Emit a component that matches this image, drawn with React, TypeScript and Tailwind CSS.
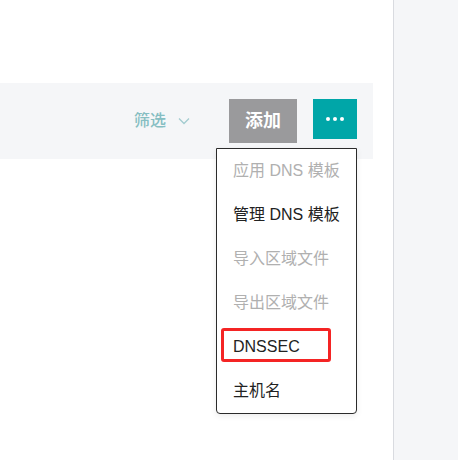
import React from "react";

// DNS record toolbar with the "more" dropdown open

const menuItems = [
  { label: "应用 DNS 模板", disabled: true },
  { label: "管理 DNS 模板", disabled: false },
  { label: "导入区域文件", disabled: true },
  { label: "导出区域文件", disabled: true },
  { label: "DNSSEC", disabled: false, highlight: true },
  { label: "主机名", disabled: false },
];

export default function App() {
  return (
    <div
      className="flex w-[458px] h-[460px] bg-white overflow-hidden"
      style={{ fontFamily: '"Liberation Sans", "Noto Sans CJK SC", sans-serif' }}
    >
      {/* Main area */}
      <div className="w-[393px] shrink-0 pt-[83px] pr-[20px]">
        <div className="h-[76px] bg-[#f5f6f8] flex items-start justify-end pt-[16px] pr-[16px]">
          {/* Filter */}
          <button className="flex items-center h-[44px] text-[16px] font-medium text-[#86bec2] mr-[39px]">
            筛选
            <svg
              className="ml-[12px]"
              width="12"
              height="8"
              viewBox="0 0 12 8"
              fill="none"
              stroke="#a3ccd0"
              strokeWidth="1.3"
            >
              <path d="M1 1.5 L6 6.5 L11 1.5" />
            </svg>
          </button>

          {/* Add */}
          <button className="w-[68px] h-[44px] bg-[#9a9a9c] text-white text-[18px] font-bold mr-[16px]">
            添加
          </button>

          {/* More + dropdown */}
          <div className="relative">
            <button className="w-[44px] h-[40px] bg-[#00a6a8] flex items-center justify-center gap-[3px]">
              <span className="w-[4px] h-[4px] rounded-full bg-white" />
              <span className="w-[4px] h-[4px] rounded-full bg-white" />
              <span className="w-[4px] h-[4px] rounded-full bg-white" />
            </button>

            <div className="absolute right-0 top-[49px] w-[141px] bg-white border border-[#2b2b2b] rounded-b-[4px] shadow-[0_2px_6px_rgba(0,0,0,0.08)] z-10">
              {menuItems.map((item) => (
                <div
                  key={item.label}
                  className={`relative h-[44px] flex items-center pl-[16px] text-[16px] whitespace-nowrap ${
                    item.disabled ? "text-[#b0b0b0]" : "text-[#222222]"
                  }`}
                >
                  {item.label}
                  {item.highlight && (
                    <div className="absolute left-[4px] top-[3px] w-[110px] h-[34px] border-[3px] border-[#f42424] rounded-[3px]" />
                  )}
                </div>
              ))}
            </div>
          </div>
        </div>
      </div>

      {/* Right panel */}
      <div className="flex-1 border-l border-[#d9dbe0] bg-[#f5f6f8]" />
    </div>
  );
}
